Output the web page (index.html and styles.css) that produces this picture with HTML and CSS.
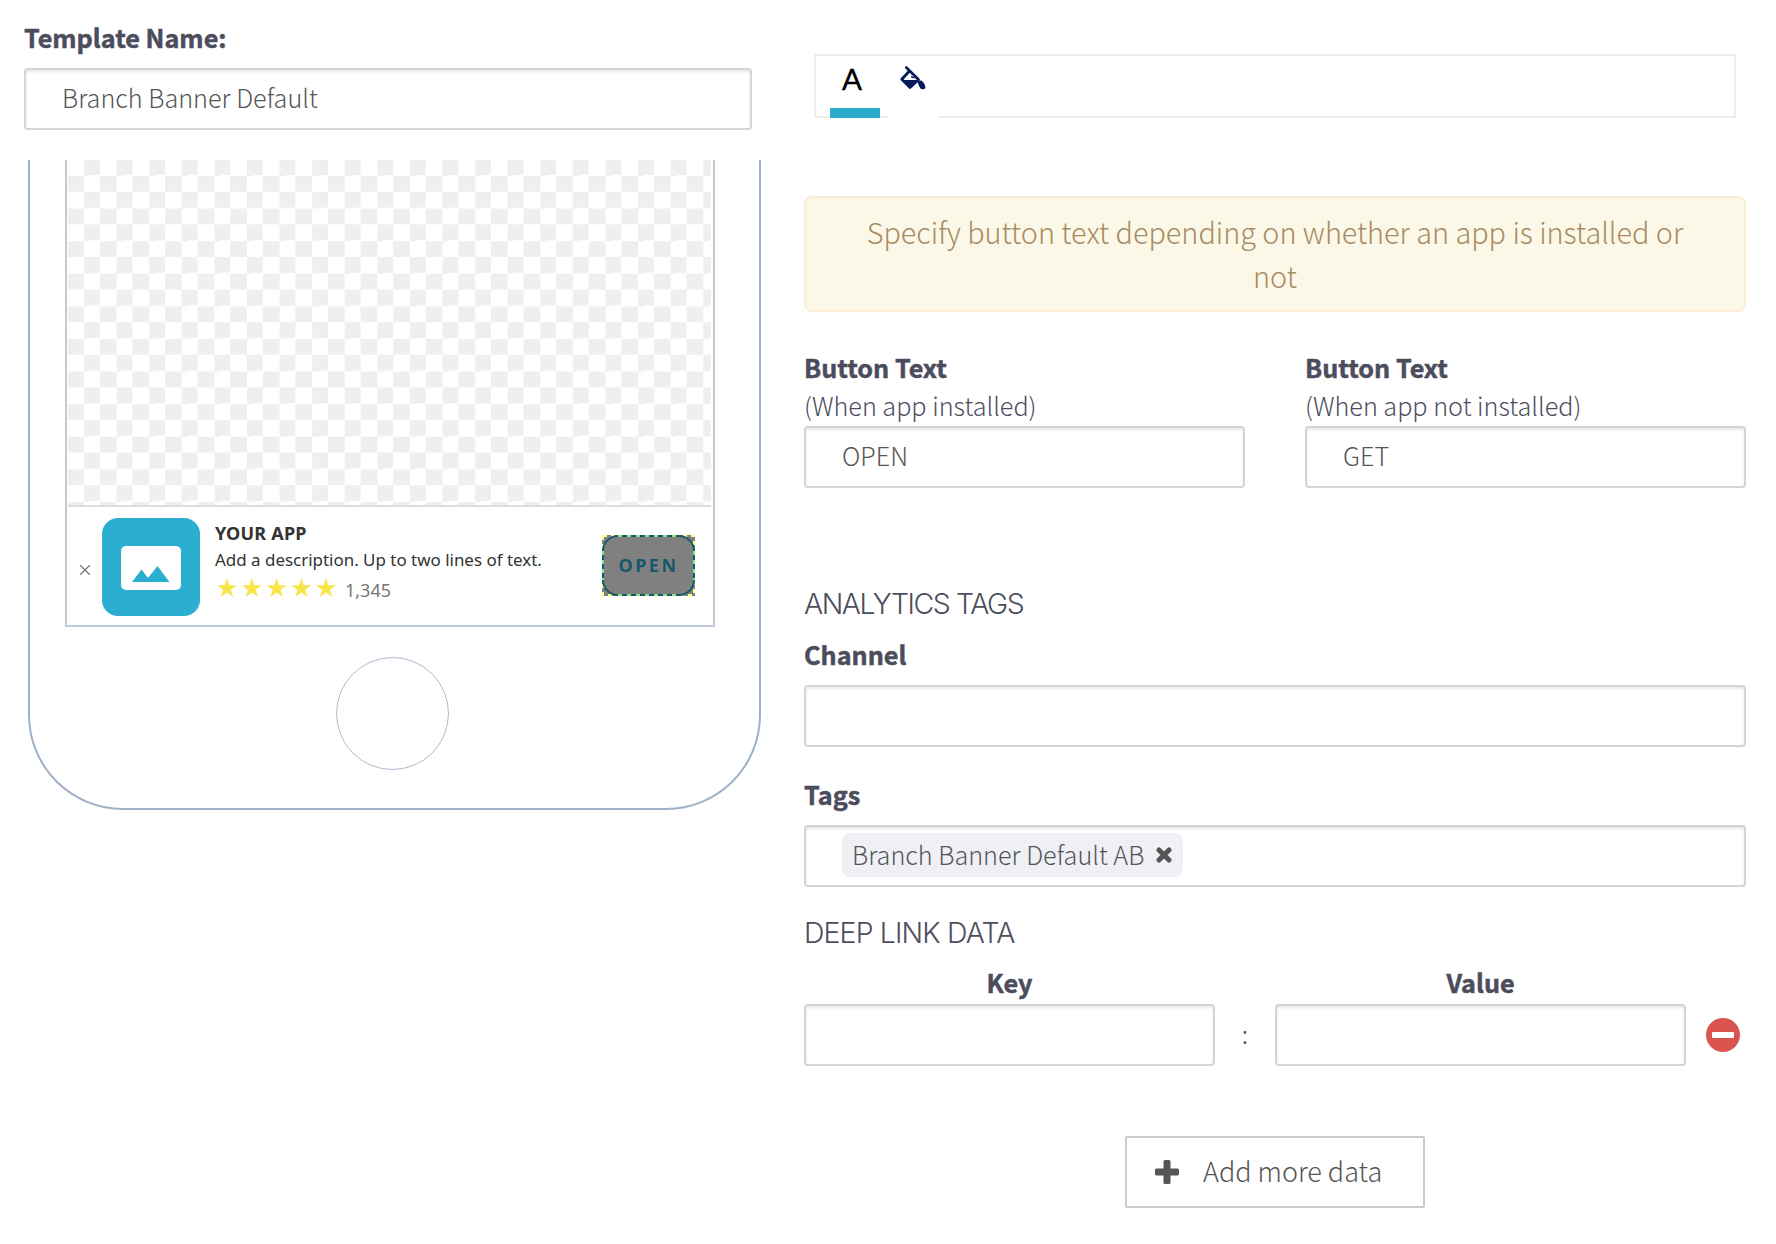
FILE: index.html
```html
<!DOCTYPE html>
<html lang="en">
<head>
<meta charset="utf-8">
<title>Banner template editor</title>
<link rel="stylesheet" href="styles.css">
</head>
<body>
<main class="editor">
  <section class="preview-column">
    <label class="label name-label">Template Name:</label>
    <div class="field">Branch Banner Default</div>
    <div class="phone">
      <div class="screen">
        <div class="canvas"></div>
        <div class="banner">
          <svg class="dismiss" viewBox="0 0 12 12"><path d="M1.2 1.2 10.8 10.8M10.8 1.2 1.2 10.8"/></svg>
          <svg class="app-icon" viewBox="0 0 98 98"><rect width="98" height="98" rx="16" fill="#2baecf"/><rect x="19" y="28" width="60" height="44" rx="5" fill="#fff"/><path d="M30 64 39.5 51.5 46 60 55.500 48 67.500 64Z" fill="#2baecf"/></svg>
          <div class="app-info">
            <div class="app-name">YOUR APP</div>
            <div class="app-desc">Add a description. Up to two lines of text.</div>
            <div class="rating">
              <svg class="stars" viewBox="0 0 119 20"><defs><path id="star" d="M10 0 12.4 7.200H20L13.900 11.700 16.200 19 10 14.500 3.800 19 6.100 11.700 0 7.200H7.600Z"/></defs><g fill="#f8e548"><use href="#star"/><use href="#star" x="24.800"/><use href="#star" x="49.600"/><use href="#star" x="74.400"/><use href="#star" x="99"/></g></svg>
              <span class="reviews">1,345</span>
            </div>
          </div>
          <div class="open-button">OPEN<svg class="outline" viewBox="0 0 93 61"><rect x="1" y="1" width="91" height="59" fill="none" stroke="#ffff80" stroke-width="2" stroke-dasharray="4 4"/><rect x="1" y="1" width="91" height="59" rx="15" fill="none" stroke="#17596b" stroke-width="2"/><path d="M16 1H77M16 60H77M1 16V45M92 16V45" fill="none" stroke="#91df83" stroke-width="2" stroke-dasharray="4 5"/></svg></div>
        </div>
      </div>
      <div class="home"></div>
    </div>
  </section>

  <section class="settings-column">
    <div class="toolbar">
      <div class="tab tab-active">A</div>
      <div class="tab"><svg class="bucket" viewBox="0 0 26 24"><path d="M6.300 1.500 18.500 13.500" stroke="#03195a" stroke-width="2.600" stroke-linecap="round"/><path d="M9.500 5 1.800 13.200 10 21.500 18.300 14" fill="none" stroke="#03195a" stroke-width="2.800" stroke-linejoin="round"/><path d="M2 14H17.500L10 22Z" fill="#03195a"/><path d="M11 9.500 16 12.500 11.500 12Z" fill="#03195a"/><path d="M18 17.500C17.500 15 19 13.800 21.500 14.800 24 16.500 25.600 19.500 25.300 22 24.500 23.700 21.500 23.700 20.200 22.300Z" fill="#03195a"/></svg></div>
    </div>
    <div class="notice"><div class="notice-line">Specify button text depending on whether an app is installed or</div><div class="notice-line">not</div></div>
    <div class="pair">
      <div class="form-group"><label class="label">Button Text</label><div class="hint">(When app installed)</div><div class="field">OPEN</div></div>
      <div class="form-group"><label class="label">Button Text</label><div class="hint">(When app not installed)</div><div class="field">GET</div></div>
    </div>
    <h2 class="heading heading-analytics">ANALYTICS TAGS</h2>
    <label class="label channel-label">Channel</label>
    <div class="field"></div>
    <label class="label tags-label">Tags</label>
    <div class="field"><span class="tag">Branch Banner Default AB<svg class="tag-x" viewBox="0 0 16 16"><path d="M3 3 13 13M13 3 3 13"/></svg></span></div>
    <h2 class="heading heading-deep">DEEP LINK DATA</h2>
    <div class="data-row">
      <div class="form-group"><label class="label centered">Key</label><div class="field"></div></div>
      <div class="colon">:</div>
      <div class="form-group"><label class="label centered">Value</label><div class="field"></div></div>
      <svg class="remove" viewBox="0 0 34 34"><circle cx="17" cy="17" r="17" fill="#d9534f"/><rect x="6" y="14" width="22" height="6" rx="1" fill="#fff"/></svg>
    </div>
    <div class="add-button"><svg class="plus" viewBox="0 0 24 24"><rect x="8.500" y="0" width="7" height="24" rx="1.500"/><rect x="0" y="8.500" width="24" height="7" rx="1.500"/></svg><span class="add-text">Add more data</span></div>
  </section>
</main>
</body>
</html>
```
FILE: styles.css
```css
* { box-sizing: border-box; }
body { margin: 0; background: #fff; color: #4b4d5c; font-family: "Noto Sans CJK SC", "Open Sans", sans-serif; font-size: 25.2px; font-weight: 300; }
.editor { display: grid; grid-template-columns: 738px 942px; column-gap: 42px; padding-left: 24px; height: 1244px; align-items: start; }
.label { display: block; height: 38px; line-height: 38px; font-weight: 700; white-space: nowrap; -webkit-text-stroke: .5px #4b4d5c; }
.name-label { margin: 18px 0 12px; }
.field { display: flex; align-items: center; height: 62px; padding: 0 36px 4px; border: 2px solid #d3d3d9; border-radius: 4px; background: #fff; box-shadow: inset 0 2px 3px rgba(0,0,0,.09); color: #555; white-space: nowrap; }
.preview-column > .field { width: 728px; }

.phone { display: flex; flex-direction: column; align-items: center; width: 733px; height: 650px; margin: 30px 0 0 4px; border: 2px solid #9fb1c6; border-top: 0; border-radius: 0 0 95px 95px; }
.screen { flex-shrink: 0; width: 650px; height: 467px; margin-right: 9px; border: 2px solid #c1cbd8; border-top: 0; padding: 0 2px 0 1px; }
.canvas { height: 347px; border-bottom: 2px solid #ddd; background: conic-gradient(#efefef 25%, #fff 0 50%, #efefef 0 75%, #fff 0) -.8px -.8px / 32.600px 32.600px; }
.banner { display: flex; height: 118px; color: #333; font-family: "Noto Sans", "Open Sans", sans-serif; font-weight: 400; white-space: nowrap; }
.banner > * { flex-shrink: 0; }
.dismiss { width: 12px; height: 12px; margin: 57px 0 0 11px; fill: none; stroke: #777; stroke-width: 1.300; }
.app-icon { width: 98px; height: 98px; margin: 11px 0 0 11px; }
.app-info { width: 402px; padding: 13px 0 0 15px; }
.app-name { height: 26px; line-height: 27px; font-size: 18px; font-weight: 700; letter-spacing: .2px; }
.app-desc { height: 28px; line-height: 28px; font-size: 16.950px; }
.rating { display: flex; align-items: center; height: 31px; }
.stars { width: 119px; height: 20px; margin: -3px 9px 0 2px; }
.reviews { color: #777; font-size: 18px; }
.open-button { position: relative; display: flex; align-items: center; justify-content: center; width: 93px; height: 61px; margin-top: 28px; padding-bottom: 1px; background: #808080; color: #17596b; font-size: 18px; font-weight: 700; letter-spacing: 2.500px; }
.outline { position: absolute; inset: 0; width: 93px; height: 61px; }
.home { flex-shrink: 0; width: 113px; height: 113px; margin: 30px 0 0 -5px; border: 1px solid #afbdce; border-radius: 50%; }

.toolbar { display: flex; gap: 8px; width: 922px; height: 64px; margin: 54px 0 0 10px; padding-left: 14px; border: 2px solid #eee; }
.tab { display: flex; justify-content: center; width: 50px; height: 62px; border-bottom: 10px solid #fff; }
.tab-active { border-color: #2baccf; color: #000; font: 400 29.500px/46px Lato, sans-serif; padding-right: 6px; -webkit-text-stroke: .4px #000; }
.bucket { width: 26px; height: 24px; margin-top: 10px; }
.notice { display: flex; flex-direction: column; height: 116px; margin-top: 78px; padding-top: 12px; border: 2px solid #fbeed5; border-radius: 8px; background: #fcf8e8; color: #a88b62; font-size: 28.800px; text-align: center; }
.notice-line { height: 44px; line-height: 44px; white-space: nowrap; }
.pair { display: grid; grid-template-columns: 441px 441px; gap: 60px; margin-top: 36px; }
.hint { height: 40px; line-height: 38px; white-space: nowrap; }
.heading { height: 34px; margin: 0; font: 300 28.400px/34px Inter, "Liberation Sans", sans-serif; white-space: nowrap; }
.heading-analytics { margin-top: 99px; letter-spacing: -1.400px; }
.channel-label { margin: 14px 0 12px; }
.tags-label { margin: 28px 0 12px; }
.tag { display: flex; align-items: center; height: 44px; margin-top: 2px; padding: 0 11px 2px 10px; border-radius: 8px; background: #eff0f5; }
.tag-x { width: 16px; height: 16px; margin: 2px 0 0 12px; stroke: #555; stroke-width: 5; stroke-linecap: round; }
.heading-deep { margin-top: 29px; letter-spacing: -.850px; }
.data-row { display: grid; grid-template-columns: 411px 60px 411px 34px; margin-top: 13px; align-items: end; }
.centered { margin-bottom: 3px; text-align: center; }
.colon { height: 62px; line-height: 58px; text-align: center; }
.remove { width: 34px; height: 34px; margin: 0 0 14px 20px; }
.add-button { display: flex; align-items: center; width: 300px; height: 72px; margin: 70px auto 0; padding-left: 28px; border: 2px solid #ccc; border-radius: 2px; color: #555; font-size: 27px; white-space: nowrap; }
.add-text { padding-bottom: 4px; }
.plus { width: 24px; height: 24px; margin-right: 24px; fill: #555; }
```
